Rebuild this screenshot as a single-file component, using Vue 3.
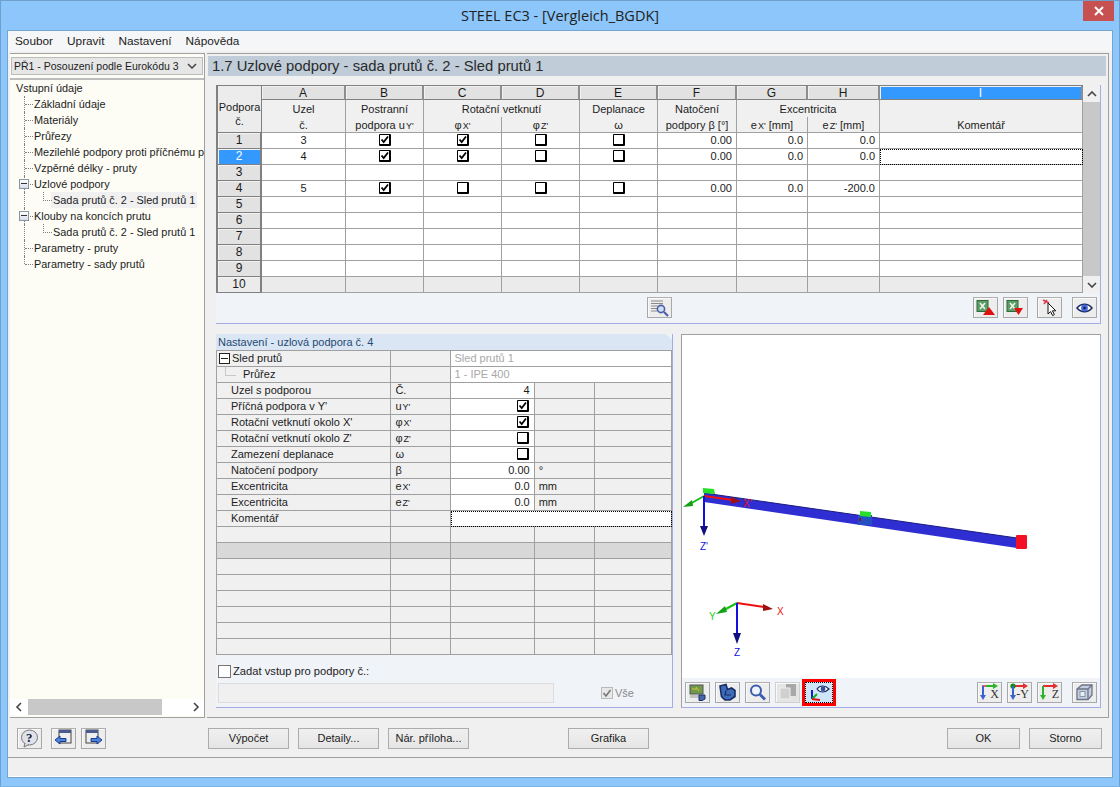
<script setup>
const tree = [
  { t: 'Vstupní údaje', l: 0 },
  { t: 'Základní údaje', l: 1 },
  { t: 'Materiály', l: 1 },
  { t: 'Průřezy', l: 1 },
  { t: 'Mezilehlé podpory proti příčnému po', l: 1 },
  { t: 'Vzpěrné délky - pruty', l: 1 },
  { t: 'Uzlové podpory', l: 1, exp: true },
  { t: 'Sada prutů č. 2 - Sled prutů 1', l: 2, sel: true },
  { t: 'Klouby na koncích prutu', l: 1, exp: true },
  { t: 'Sada prutů č. 2 - Sled prutů 1', l: 2 },
  { t: 'Parametry - pruty', l: 1 },
  { t: 'Parametry - sady prutů', l: 1, last: true }
]
const rows = [
  { n: 1, u: '3', c: [1, 1, 0, 0], f: '0.00', g: '0.0', h: '0.0' },
  { n: 2, u: '4', c: [1, 1, 0, 0], f: '0.00', g: '0.0', h: '0.0', active: true },
  { n: 3 },
  { n: 4, u: '5', c: [1, 0, 0, 0], f: '0.00', g: '0.0', h: '-200.0' },
  { n: 5 }, { n: 6 }, { n: 7 }, { n: 8 }, { n: 9 }, { n: 10, grey: true }
]
const letters = ['A', 'B', 'C', 'D', 'E', 'F', 'G', 'H']
const props = [
  { a: "Uzel s podporou", b: 'Č.', v: '4' },
  { a: "Příčná podpora v Y'", b: 'u', s: "Y'", c: 1 },
  { a: "Rotační vetknutí okolo X'", b: 'φ', s: "X'", c: 1 },
  { a: "Rotační vetknutí okolo Z'", b: 'φ', s: "Z'", c: 0 },
  { a: 'Zamezení deplanace', b: 'ω', c: 0 },
  { a: 'Natočení podpory', b: 'β', v: '0.00', d: '°' },
  { a: 'Excentricita', b: 'e', s: "X'", v: '0.0', d: 'mm' },
  { a: 'Excentricita', b: 'e', s: "Z'", v: '0.0', d: 'mm' }
]
const emptyRows = [false, true, false, false, false, false, false, false]
</script>

<template>
  <div class="win">
    <header class="titlebar">
      <span class="title">STEEL EC3 - [Vergleich_BGDK]</span>
      <span class="close">
        <svg width="12" height="10" viewBox="0 0 12 10"><path d="M2 1l8 8M10 1L2 9" stroke="#fff" stroke-width="2" /></svg>
      </span>
    </header>

    <div class="client">
      <nav class="menu">
        <span>Soubor</span><span>Upravit</span><span>Nastavení</span><span>Nápověda</span>
      </nav>

      <div class="body">
        <aside class="side">
          <div class="combo">
            <span>PŘ1 - Posouzení podle Eurokódu 3</span>
            <svg width="10" height="6" viewBox="0 0 10 6"><path d="M1 1l4 4 4-4" fill="none" stroke="#444" stroke-width="1.5" /></svg>
          </div>
          <div class="tree">
            <div v-for="(n, i) in tree" :key="i" class="node" :class="['l' + n.l, { last: n.last }]">
              <span v-if="n.exp" class="exp"></span>
              <span class="label" :class="{ sel: n.sel }">{{ n.t }}</span>
            </div>
          </div>
          <div class="hscroll">
            <svg width="8" height="10" viewBox="0 0 8 10"><path d="M6 1L2 5l4 4" fill="none" stroke="#444" stroke-width="1.6" /></svg>
            <span class="thumb"></span>
            <svg width="8" height="10" viewBox="0 0 8 10"><path d="M2 1l4 4-4 4" fill="none" stroke="#444" stroke-width="1.6" /></svg>
          </div>
        </aside>

        <main class="main">
          <h1 class="heading">1.7 Uzlové podpory - sada prutů č. 2 - Sled prutů 1</h1>

          <section class="upper">
            <div class="gridwrap">
              <table class="grid">
                <colgroup>
                  <col style="width:44px" /><col style="width:84px" /><col style="width:78px" /><col style="width:78px" /><col style="width:78px" /><col style="width:78px" /><col style="width:79px" /><col style="width:71px" /><col style="width:72px" /><col style="width:203px" />
                </colgroup>
                <tr class="r-letter">
                  <th rowspan="3" class="corner">Podpora<br />č.</th>
                  <th v-for="l in letters" :key="l" class="letter">{{ l }}</th>
                  <th class="letter on">I</th>
                </tr>
                <tr class="r-h1">
                  <th class="nb">Uzel</th>
                  <th class="nb">Postranní</th>
                  <th class="nb" colspan="2">Rotační vetknutí</th>
                  <th class="nb">Deplanace</th>
                  <th class="nb">Natočení</th>
                  <th class="nb" colspan="2">Excentricita</th>
                  <th class="nb"></th>
                </tr>
                <tr class="r-h2">
                  <th>č.</th>
                  <th>podpora u<small>Y'</small></th>
                  <th>φ<small>X'</small></th>
                  <th>φ<small>Z'</small></th>
                  <th>ω</th>
                  <th>podpory β [°]</th>
                  <th>e<small>X'</small> [mm]</th>
                  <th>e<small>Z'</small> [mm]</th>
                  <th>Komentář</th>
                </tr>
                <tr v-for="r in rows" :key="r.n" class="r-body" :class="{ grey: r.grey }">
                  <td class="num" :class="{ on: r.active }">{{ r.n }}</td>
                  <td class="ctr">{{ r.u }}</td>
                  <td v-for="(k, i) in 4" :key="i" class="ctr">
                    <span v-if="r.c" class="cb">
                      <svg v-if="r.c[i]" width="9" height="9" viewBox="0 0 9 9"><path d="M1.5 4.5l2.2 2.5L8 1.5" fill="none" stroke="#000" stroke-width="1.8" /></svg>
                    </span>
                  </td>
                  <td class="val">{{ r.f }}</td>
                  <td class="val">{{ r.g }}</td>
                  <td class="val">{{ r.h }}</td>
                  <td :class="{ focus: r.active }"></td>
                </tr>
              </table>
              <div class="vscroll">
                <span class="vbtn"><svg width="10" height="6" viewBox="0 0 10 6"><path d="M1 5l4-4 4 4" fill="none" stroke="#444" stroke-width="1.6" /></svg></span>
                <span class="vthumb"></span>
                <span class="vbtn"><svg width="10" height="6" viewBox="0 0 10 6"><path d="M1 1l4 4 4-4" fill="none" stroke="#444" stroke-width="1.6" /></svg></span>
              </div>
            </div>
            <div class="tools upper-tools">
              <button class="ib find">
                <svg width="21" height="18" viewBox="0 0 21 18"><path d="M2 2h12M2 4.5h12M2 7h7M2 9.5h6M2 12h6" stroke="#8a8a8a" fill="none" /><circle cx="12" cy="10" r="3.6" fill="#cfe0f4" stroke="#4b5fa8" stroke-width="1.6" /><path d="M15 13l4 4" stroke="#4b5fa8" stroke-width="2.2" /></svg>
              </button>
              <span class="grow"></span>
              <button class="ib">
                <svg width="21" height="18" viewBox="0 0 21 18"><rect x="2" y="1.500" width="11" height="11" fill="#5c9c66" stroke="#2c6a3a" /><path d="M5 4l5 6M10 4l-5 6" stroke="#eef6ea" stroke-width="1.600" /><path d="M14 8l6 8H8z" fill="#e01010" /></svg>
              </button>
              <button class="ib">
                <svg width="21" height="18" viewBox="0 0 21 18"><rect x="2" y="1.500" width="11" height="11" fill="#5c9c66" stroke="#2c6a3a" /><path d="M5 4l5 6M10 4l-5 6" stroke="#eef6ea" stroke-width="1.600" /><path d="M9 9h9l-4.500 7z" fill="#e01010" /></svg>
              </button>
              <button class="ib mid">
                <svg width="21" height="18" viewBox="0 0 21 18"><path d="M4 1l6 3M8 1L5 5" stroke="#d83a4a" stroke-width="1.6" /><path d="M9 4v11l2.600-2.400 2 4 1.800-1-2-3.800h3.400z" fill="#fff" stroke="#111" stroke-width="1" /></svg>
              </button>
              <button class="ib eyeb">
                <svg width="21" height="18" viewBox="0 0 21 18"><path d="M3 9c4-5 11-5 15 0-4 5-11 5-15 0z" fill="#fff" stroke="#1b2b66" stroke-width="1.5" /><circle cx="10.500" cy="9" r="3.400" fill="#4468d8" /><circle cx="10.500" cy="9" r="1.200" fill="#10184a" /></svg>
              </button>
            </div>
          </section>

          <div class="lower">
            <section class="settings">
              <div class="tab">Nastavení - uzlová podpora č. 4</div>
              <table class="ptable">
                <colgroup><col style="width:175px" /><col style="width:59px" /><col style="width:84px" /><col style="width:60px" /><col style="width:77px" /></colgroup>
                <tr>
                  <td class="first"><span class="minus"></span>Sled prutů</td><td></td>
                  <td colspan="3" class="white dim">Sled prutů 1</td>
                </tr>
                <tr>
                  <td class="first branch">Průřez</td><td></td>
                  <td colspan="3" class="white dim">1 - IPE 400</td>
                </tr>
                <tr v-for="(p, i) in props" :key="i">
                  <td class="first ind">{{ p.a }}</td>
                  <td class="sym">{{ p.b }}<small v-if="p.s">{{ p.s }}</small></td>
                  <td class="white val">
                    <span v-if="p.c !== undefined" class="cb pcb">
                      <svg v-if="p.c" width="9" height="9" viewBox="0 0 9 9"><path d="M1.500 4.500l2.200 2.500L8 1.500" fill="none" stroke="#000" stroke-width="1.800" /></svg>
                    </span>
                    <template v-else>{{ p.v }}</template>
                  </td>
                  <td class="unit">{{ p.d }}</td>
                  <td></td>
                </tr>
                <tr>
                  <td class="first ind">Komentář</td><td></td>
                  <td colspan="3" class="white focus"></td>
                </tr>
                <tr v-for="(d, i) in emptyRows" :key="'e' + i" :class="{ dark: d }">
                  <td></td><td></td><td></td><td></td><td></td>
                </tr>
              </table>
              <div class="pfoot">
                <label class="zadat"><span class="box"></span>Zadat vstup pro podpory č.:</label>
                <div class="pfoot-row">
                  <span class="input"></span>
                  <label class="vse">
                    <span class="box small">
                      <svg width="10" height="10" viewBox="0 0 10 10"><path d="M1.500 5l2.500 3L8.500 2" fill="none" stroke="#777" stroke-width="1.600" /></svg>
                    </span>Vše
                  </label>
                </div>
              </div>
            </section>

            <section class="view">
              <svg class="scene" width="418" height="343" viewBox="682 335 418 343">
                <polygon points="704,493 1017,538 1017,548 704,502" fill="#2e2ed2" />
                <path d="M704 493L1017 538" stroke="#1a1a80" stroke-width="1" />
                <rect x="858" y="515" width="14" height="10" fill="#2450c4" />
                <rect x="859" y="518" width="2" height="3" fill="#8a1030" />
                <polygon points="703,488 714,489 715,494 703,493" fill="#28e028" />
                <polygon points="860,511 871,512 871,517 860,516" fill="#28e028" />
                <rect x="1016" y="535" width="11" height="14" rx="1" fill="#f41024" />
                <path d="M704 496L690 504" stroke="#16c016" stroke-width="2" />
                <polygon points="683,507 692,500 693,506" fill="#16a016" />
                <path d="M704 496L733 500" stroke="#ee1010" stroke-width="2" />
                <polygon points="741,501 731,497 731,504" fill="#a01010" />
                <path d="M704 496V528" stroke="#1010e0" stroke-width="2" />
                <polygon points="704,536 700,526 708,526" fill="#101080" />
                <text x="743" y="507" class="lbl" fill="#f01010">X'</text>
                <text x="700" y="550" class="lbl" fill="#1010e0">Z'</text>
                <path d="M737 603L764 607" stroke="#ee1010" stroke-width="2" />
                <polygon points="773,609 763,604 763,611" fill="#a01010" />
                <path d="M737 603L724 610" stroke="#16c016" stroke-width="2" />
                <polygon points="716,614 725,606 727,612" fill="#16a016" />
                <path d="M737 603V634" stroke="#1010e0" stroke-width="2" />
                <polygon points="737,644 733,633 741,633" fill="#101080" />
                <text x="777" y="615" class="lbl" fill="#f01010">X</text>
                <text x="709" y="620" class="lbl" fill="#20d020">Y</text>
                <text x="734" y="656" class="lbl" fill="#1010e0">Z</text>
              </svg>
              <div class="tools view-tools">
                <button class="ib">
                  <svg width="21" height="18" viewBox="0 0 21 18"><rect x="3" y="2" width="13" height="9" fill="#6e9a4a" stroke="#555" /><path d="M5 6h5M9 4l3 4" stroke="#d6c23a" /><path d="M3 12h9M3 14h9" stroke="#999" /><path d="M12 12h6v4l-3 1.500h-3z" fill="#4766b0" stroke="#1d2f66" /></svg>
                </button>
                <button class="ib">
                  <svg width="21" height="18" viewBox="0 0 21 18"><path d="M3 3l6-1.500 1.500 5 4-1.500 3.500 2.500v6l-5 3.500H8l-3.500-3.500z" fill="#3f6cb8" stroke="#142c64" stroke-width="1.600" /><path d="M9 7.500L8 12l6 0" fill="none" stroke="#142c64" stroke-width="1.200" /></svg>
                </button>
                <button class="ib">
                  <svg width="21" height="18" viewBox="0 0 21 18"><circle cx="9" cy="7.500" r="5" fill="#eef4fc" stroke="#3c5cac" stroke-width="2" /><path d="M13 11.500l5 5" stroke="#3c5cac" stroke-width="2.800" /></svg>
                </button>
                <button class="ib off">
                  <svg width="21" height="18" viewBox="0 0 21 18"><rect x="9" y="1" width="10" height="12" fill="#a8a8a8" /><rect x="3" y="5" width="10" height="11" fill="#d0d0d0" stroke="#eee" /></svg>
                </button>
                <span class="mark">
                  <button class="ib active">
                    <svg width="21" height="18" viewBox="0 0 21 18"><path d="M8 6c3-4 8-4 12 0-4 4-9 4-12 0z" fill="#fff" stroke="#1b2b66" stroke-width="1.200" /><circle cx="14" cy="6" r="2.400" fill="#33509c" /><path d="M3 16V7" stroke="#1818d8" stroke-width="2" /><path d="M3 16l5-5" stroke="#16b016" stroke-width="2" /><path d="M3 16l8 1" stroke="#e01010" stroke-width="2" /></svg>
                  </button>
                </span>
                <span class="grow"></span>
                <button class="ib axis">
                  <svg width="21" height="18" viewBox="0 0 21 18"><path d="M4 3h11" stroke="#2bb52b" stroke-width="2" /><path d="M14 0l5 3-5 3z" fill="#2bb52b" /><path d="M3 3h4" stroke="#e06080" stroke-width="2" /><path d="M4 3v10" stroke="#3c60d0" stroke-width="2" /><path d="M1 12h6l-3 5z" fill="#3c60d0" /></svg>
                  <b>X</b>
                </button>
                <button class="ib axis">
                  <svg width="21" height="18" viewBox="0 0 21 18"><path d="M4 3h11" stroke="#e03030" stroke-width="2" /><path d="M14 0l5 3-5 3z" fill="#e03030" /><circle cx="4" cy="3" r="2.600" fill="#128a12" /><path d="M4 3v10" stroke="#3c60d0" stroke-width="2" /><path d="M1 12h6l-3 5z" fill="#3c60d0" /></svg>
                  <b>-Y</b>
                </button>
                <button class="ib axis">
                  <svg width="21" height="18" viewBox="0 0 21 18"><path d="M4 3h11" stroke="#e03030" stroke-width="2" /><path d="M14 0l5 3-5 3z" fill="#e03030" /><path d="M4 3v10" stroke="#2bb52b" stroke-width="2" /><path d="M1 12h6l-3 5z" fill="#2bb52b" /></svg>
                  <b>Z</b>
                </button>
                <button class="ib cube">
                  <svg width="21" height="18" viewBox="0 0 21 18"><path d="M3 6l5-4h10v10l-4 4.500H3z" fill="#c4cede" stroke="#6a7486" stroke-width="1.300" /><path d="M3 6h11v10.500M14 6l4-4" fill="none" stroke="#6a7486" stroke-width="1.300" /><rect x="6" y="8.500" width="5" height="5" fill="#e8eef6" stroke="#8a94a6" /></svg>
                </button>
              </div>
            </section>
          </div>
        </main>
      </div>

      <footer class="foot">
        <button class="ib help">
          <svg width="21" height="19" viewBox="0 0 21 19"><ellipse cx="10.500" cy="8.500" rx="8" ry="7.500" fill="#dfe2ea" stroke="#777" /><path d="M6 14l-1 4 5-2.500" fill="#dfe2ea" stroke="#777" /><text x="7" y="13" class="q">?</text></svg>
        </button>
        <button class="ib nav">
          <svg width="21" height="19" viewBox="0 0 21 19"><rect x="6" y="1" width="12" height="13" fill="#eee" stroke="#444" /><rect x="6" y="1" width="12" height="3" fill="#4a5a8c" /><path d="M2 11l5-4v2.500h6v3H7V15z" fill="#4a84dc" stroke="#1c3a8a" /></svg>
        </button>
        <button class="ib nav2">
          <svg width="21" height="19" viewBox="0 0 21 19"><rect x="3" y="1" width="12" height="13" fill="#eee" stroke="#444" /><rect x="3" y="1" width="12" height="3" fill="#4a5a8c" /><path d="M19 11l-5-4v2.500H8v3h6V15z" fill="#4a84dc" stroke="#1c3a8a" /></svg>
        </button>
        <button class="tb t1">Výpočet</button>
        <button class="tb t2">Detaily...</button>
        <button class="tb t3">Nár. příloha...</button>
        <button class="tb t4">Grafika</button>
        <span class="grow"></span>
        <button class="tb ok">OK</button>
        <button class="tb t5">Storno</button>
      </footer>
      <div class="status"></div>
    </div>
  </div>
</template>

<style scoped>
* { box-sizing: border-box; }
.win {
  width: 1120px; height: 787px; background: #8cc6fa; border: 1px solid #6f9fcb; border-bottom-color: #7ab3e6;
  font: 11px "Liberation Sans", Arial, sans-serif; color: #1c1c1c; overflow: hidden; display: flex; flex-direction: column;
}
.titlebar { height: 29px; flex: none; position: relative; display: flex; align-items: center; justify-content: center; }
.title { font: 14.500px "Open Sans", "Liberation Sans", sans-serif; color: #222; }
.close { position: absolute; top: 0; right: 5px; width: 31px; height: 20px; background: #c75050; display: flex; align-items: center; justify-content: center; }
.client { width: 1106px; height: 748px; margin-left: 6px; background: #f0f0f0; border: 1px solid #74a5d0; display: flex; flex-direction: column; }
.menu { height: 20px; flex: none; background: #f5f6f7; display: flex; align-items: center; gap: 14px; padding-left: 7px; font-size: 11.800px; }
.body { height: 667px; flex: none; display: flex; padding: 2px 0 0 2px; }
.side { width: 195px; height: 665px; flex: none; background: #fdfdf6; border-top: 1px solid #a0a0a0; border-right: 1px solid #a0a0a0; border-bottom: 1px solid #a0a0a0; display: flex; flex-direction: column; }
.combo { height: 18px; margin: 3px 1px 3px 1px; background: #e6e6e6; border: 1px solid #bbb; display: flex; align-items: center; justify-content: space-between; padding: 0 5px 0 2px; font-size: 10.500px; }
.tree { flex: 1; border-top: 2px solid #bdbdbd; padding-top: 0; overflow: hidden; position: relative; }
.node { height: 16px; line-height: 16px; position: relative; white-space: nowrap; font-size: 10.900px; }
.l0 { padding-left: 6px; }
.l1 { padding-left: 24px; }
.l2 { padding-left: 43px; }
.l1::before { content: ""; position: absolute; left: 14px; top: 0; bottom: 0; border-left: 1px dotted #808080; }
.l1.last::before { bottom: 8px; }
.l2::before { content: ""; position: absolute; left: 14px; top: 0; bottom: 0; border-left: 1px dotted #808080; }
.l1::after { content: ""; position: absolute; left: 15px; width: 8px; top: 8px; border-top: 1px dotted #808080; }
.l2::after { content: ""; position: absolute; left: 33px; width: 8px; top: 0; height: 8px; border-left: 1px dotted #808080; border-bottom: 1px dotted #808080; }
.label { position: relative; display: inline-block; height: 16px; }
.sel { background: #f0f0f0; padding-right: 2px; margin-left: -2px; padding-left: 2px; }
.exp { position: absolute; left: 9px; top: 3px; width: 10px; height: 10px; z-index: 1; background: linear-gradient(#fff, #d8dce6); border: 1px solid #8a94a8; }
.exp::after { content: ""; position: absolute; left: 1px; right: 1px; top: 3px; height: 1px; background: #333; }
.hscroll { height: 16px; margin: 0 0 2px; background: #fff; display: flex; align-items: center; padding: 0 4px 0 0; justify-content: space-between; }
.hscroll svg:first-child { margin-left: 5px; }
.thumb { width: 134px; height: 16px; background: #c8c8c8; margin-left: 5px; margin-right: auto; }

.main { width: 902px; flex: none; margin-left: 2px; border-top: 1px solid #a0a0a0; border-right: 1px solid #a0a0a0; border-bottom: 1px solid #a0a0a0; height: 665px; padding-top: 2px; }
.heading { margin: 0 2px 0 1px; height: 20px; background: #c0ccd8; font: 400 14.800px/21px "Liberation Sans", Arial, sans-serif; padding-left: 4px; color: #2a2a2a; white-space: nowrap; overflow: hidden; }
.upper { margin: 9px 0 0 9px; width: 885px; background: #f0f3f8; border-right: 1px solid #a4ace6; border-bottom: 1px solid #a4ace6; height: 239px; display: flex; flex-direction: column; }
.gridwrap { display: flex; height: 208px; background: #f0f0f0; }
table { border-collapse: separate; border-spacing: 0; table-layout: fixed; }
.grid { width: 867px; flex: none; border-left: 2px solid #808080; border-top: 1px solid #808080; }
.grid th, .grid td { font-weight: 400; font-size: 11px; padding: 0; border-right: 1px solid #a0a0a0; border-bottom: 1px solid #a0a0a0; text-align: center; overflow: hidden; white-space: nowrap; }
.grid th { background: #f0f0f0; }
.grid tr { height: 16px; }
.r-letter { height: 14px !important; }
.r-h1 { height: 17px !important; }
.grid .corner { background: #ececec; line-height: 13.500px; padding-top: 15px; border-right-color: #808080; border-bottom-color: #808080; vertical-align: top; }
.grid .letter { background: #e2e2e2; border-right: 2px solid #8e8e8e; border-bottom: 1px solid #808080; line-height: 12px; font-size: 12px; box-shadow: inset 1px 1px 0 #f2f2f2; }
.grid .letter.on { background: #3399ff; color: #fff; }
.grid .nb { border-bottom: 0; }
small { font-size: 9px; margin-left: 1px; line-height: 1; }
.r-body td { background: #fff; height: 16px; line-height: 15px; }
.r-body.grey td { background: #ebebeb; }
.r-body .num { background: #e2e2e2; border-right: 2px solid #808080; border-bottom: 1px solid #808080; box-shadow: inset 1px 1px 0 #f2f2f2; font-size: 12px; }
.r-body .num.on { background: #3399ff; color: #fff; }
.grid .val { text-align: right; padding-right: 4px; }
.focus { outline: 1px dotted #000; outline-offset: -1px; }
.cb { display: inline-block; width: 12px; height: 12px; border: 1px solid #000; border-right-width: 2px; border-bottom-width: 2px; border-radius: 1px; background: #fff; vertical-align: top; margin-top: 1px; line-height: 0; }
.cb svg { display: block; }
.vscroll { width: 17px; height: 208px; background: #c8c8c8; display: flex; flex-direction: column; }
.vbtn { height: 17px; background: #f0f0f0; display: flex; align-items: center; justify-content: center; }
.vthumb { flex: 1; }
.tools { display: flex; align-items: center; }
.grow { flex: 1; }
.upper-tools { height: 30px; padding: 0 3px 1px 431px; }
.ib { width: 25px; height: 21px; flex: none; padding: 0; border: 1px solid #a8a8a8; border-top-color: #b0b0b0; background: #ededed; box-shadow: inset 1px 1px 0 #fafafa; display: flex; align-items: center; justify-content: center; position: relative; }
.ib svg { display: block; flex: none; }
.upper-tools .ib { margin-left: 5px; }
.upper-tools .find { margin-left: 0; }
.upper-tools .mid { margin-left: 9px; }
.upper-tools .eyeb { margin-left: 10px; }

.lower { display: flex; margin: 10px 0 0 9px; gap: 8px; height: 374px; }
.settings { width: 457px; height: 374px; background: #f0f3f8; border: solid #a4ace6; border-width: 0 1px 1px 0; display: flex; flex-direction: column; }
.tab { height: 16px; background: #dbe6f5; clip-path: polygon(0 0, calc(100% - 6px) 0, 100% 6px, 100% 100%, 0 100%); font-size: 11px; line-height: 16px; padding-left: 2px; color: #234a72; flex: none; }
.ptable { width: 456px; flex: none; border-top: 1px solid #a0a0a0; }
.ptable tr { height: 16px; }
.ptable td { padding: 0; height: 16px; line-height: 15px; border-right: 1px solid #a0a0a0; border-bottom: 1px solid #a0a0a0; background: #f0f0f0; white-space: nowrap; overflow: hidden; }
.ptable td:first-child { border-left: 1px solid #a0a0a0; }
.ptable .white { background: #fff; }
.ptable .dim { color: #a8a8a8; padding-left: 4px; }
.ptable .val { padding-right: 4px; text-align: right; }
.ptable .focus { outline: 1px dotted #000; outline-offset: -1px; }
.ptable .dark td { background: #d8d8d8; }
.first { position: relative; }
.ptable .ind { padding-left: 14px; }
.ptable .branch { padding-left: 26px; }
.branch::before { content: ""; position: absolute; left: 8px; top: 0; width: 10px; height: 8px; border-left: 1px solid #c8c8c8; border-bottom: 1px solid #c8c8c8; }
.minus { display: inline-block; width: 11px; height: 11px; margin: 0 2px 0 2px; vertical-align: -2px; border: 1px solid #222; background: #fff; position: relative; }
.minus::after { content: ""; position: absolute; left: 1px; right: 1px; top: 4px; height: 1px; background: #222; }
.ptable .sym { padding-left: 4px; }
.ptable .unit { padding-left: 4px; }
.pcb { margin-right: 1px; }
.pfoot { padding: 8px 2px 0; flex: 1; }
.zadat { display: flex; align-items: center; gap: 2px; height: 16px; font-size: 11.200px; }
.box { display: inline-block; width: 13px; height: 13px; background: #fff; border: 1px solid #777; }
.pfoot-row { display: flex; align-items: flex-start; margin-top: 4px; }
.input { width: 336px; height: 20px; background: #f0f0f0; border: 1px solid #dcdcdc; flex: none; }
.vse { margin-left: 47px; margin-top: 4px; display: flex; align-items: center; gap: 2px; color: #8a8a8a; }
.small { width: 12px; height: 12px; background: #e8e8e8; border-color: #bbb; line-height: 0; }
.view { width: 420px; height: 374px; border: solid #a4ace6; border-width: 0 1px 1px 0; background: #f0f3f8; display: flex; flex-direction: column; border-left: 1px solid #a0a0a0; border-top: 1px solid #a0a0a0; }
.scene { display: block; background: #fff; flex: none; }
.lbl { font: 10px "Liberation Sans", Arial, sans-serif; }
.view-tools { height: 29px; padding: 0 3px 1px 3px; gap: 5px; }
.mark { border: 3px solid #f00; width: 34px; height: 27px; flex: none; display: flex; align-items: center; justify-content: center; margin-left: -3px; }
.active { width: 28px; height: 21px; background: #cfe6fa; border: 1px dotted #000; box-shadow: none; }
.off { background: #e4e4e4; border-color: #d0d0d0; }
.axis b { position: absolute; right: 2px; bottom: 0; font: 400 12px "Liberation Serif", serif; color: #333; }
.cube { margin-left: 5px; }
.foot { height: 39px; flex: none; display: flex; align-items: center; padding: 1px 10px 0 9px; }
.foot .nav { margin-left: 9px; }
.foot .nav2 { margin-left: 5px; }
.q { font: 700 13px "Liberation Serif", serif; fill: #223; }
.tb { height: 21px; width: 81px; padding: 0; background: linear-gradient(#f0f0f0, #e5e5e5); border: 1px solid #acacac; font: 11px "Liberation Sans", Arial, sans-serif; color: #1c1c1c; }
.t1 { margin-left: 102px; }
.t2, .t3 { margin-left: 9px; }
.t4 { margin-left: 99px; }
.ok { width: 73px; }
.t5 { width: 73px; margin-left: 9px; }
.status { flex: 1; border-top: 1px solid #a0a0a0; border-bottom: 1px solid #fff; background: #f0f0f0; }
</style>
<style>
html, body { margin: 0; padding: 0; }
</style>
